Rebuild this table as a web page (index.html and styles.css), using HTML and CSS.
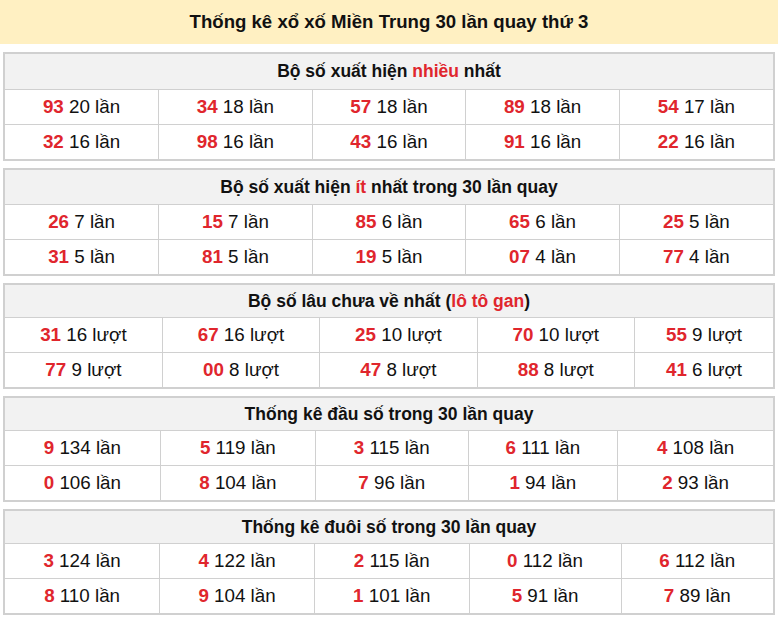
FILE: index.html
```html
<!DOCTYPE html>
<html lang="vi">
<head>
<meta charset="utf-8">
<title>Thống kê xổ xố Miền Trung</title>
<link rel="stylesheet" href="styles.css">
</head>
<body>
<div class="title">Thống kê xổ xố Miền Trung 30 lần quay thứ 3</div>

<table class="stat t1">
<tr><th colspan="5">Bộ số xuất hiện <span class="hl">nhiều</span> nhất</th></tr>
<tr><td><b>93</b> 20 lần</td><td><b>34</b> 18 lần</td><td><b>57</b> 18 lần</td><td><b>89</b> 18 lần</td><td><b>54</b> 17 lần</td></tr>
<tr><td><b>32</b> 16 lần</td><td><b>98</b> 16 lần</td><td><b>43</b> 16 lần</td><td><b>91</b> 16 lần</td><td><b>22</b> 16 lần</td></tr>
</table>

<table class="stat t2">
<tr><th colspan="5">Bộ số xuất hiện <span class="hl">ít</span> nhất trong 30 lần quay</th></tr>
<tr><td><b>26</b> 7 lần</td><td><b>15</b> 7 lần</td><td><b>85</b> 6 lần</td><td><b>65</b> 6 lần</td><td><b>25</b> 5 lần</td></tr>
<tr><td><b>31</b> 5 lần</td><td><b>81</b> 5 lần</td><td><b>19</b> 5 lần</td><td><b>07</b> 4 lần</td><td><b>77</b> 4 lần</td></tr>
</table>

<table class="stat t3">
<tr><th colspan="5">Bộ số lâu chưa về nhất (<span class="hl">lô tô gan</span>)</th></tr>
<tr><td><b>31</b> 16 lượt</td><td><b>67</b> 16 lượt</td><td><b>25</b> 10 lượt</td><td><b>70</b> 10 lượt</td><td><b>55</b> 9 lượt</td></tr>
<tr><td><b>77</b> 9 lượt</td><td><b>00</b> 8 lượt</td><td><b>47</b> 8 lượt</td><td><b>88</b> 8 lượt</td><td><b>41</b> 6 lượt</td></tr>
</table>

<table class="stat t4">
<tr><th colspan="5">Thống kê đầu số trong 30 lần quay</th></tr>
<tr><td><b>9</b> 134 lần</td><td><b>5</b> 119 lần</td><td><b>3</b> 115 lần</td><td><b>6</b> 111 lần</td><td><b>4</b> 108 lần</td></tr>
<tr><td><b>0</b> 106 lần</td><td><b>8</b> 104 lần</td><td><b>7</b> 96 lần</td><td><b>1</b> 94 lần</td><td><b>2</b> 93 lần</td></tr>
</table>

<table class="stat t5">
<tr><th colspan="5">Thống kê đuôi số trong 30 lần quay</th></tr>
<tr><td><b>3</b> 124 lần</td><td><b>4</b> 122 lần</td><td><b>2</b> 115 lần</td><td><b>0</b> 112 lần</td><td><b>6</b> 112 lần</td></tr>
<tr><td><b>8</b> 110 lần</td><td><b>9</b> 104 lần</td><td><b>1</b> 101 lần</td><td><b>5</b> 91 lần</td><td><b>7</b> 89 lần</td></tr>
</table>
</body>
</html>
```

FILE: styles.css
```css
html, body {
  margin: 0;
  padding: 0;
  background: #fff;
  font-family: "Liberation Sans", Arial, sans-serif;
  color: #111;
}

.title {
  height: 44px;
  line-height: 44px;
  background: #fff0c2;
  text-align: center;
  font-weight: bold;
  font-size: 18.6px;
}

.stat {
  width: calc(100% - 6px);
  margin: 7px 3px 0 3px;
  border-collapse: collapse;
  border: 2px solid #d0d0d0;
}

.stat.t1 { margin-top: 8px; }

.stat th {
  background: #f2f2f2;
  height: 35px;
  padding: 0;
  font-size: 17.5px;
  font-weight: bold;
  border: 1px solid #d0d0d0;
  text-align: center;
}

.stat.t2 th { height: 34px; }
.stat.t3 th,
.stat.t4 th,
.stat.t5 th { height: 32px; }

.stat td {
  height: 34px;
  padding: 0;
  font-size: 18.8px;
  border: 1px solid #d0d0d0;
  text-align: center;
}

.stat td b {
  color: #e0262d;
}

.hl {
  color: #e0262d;
}
```
